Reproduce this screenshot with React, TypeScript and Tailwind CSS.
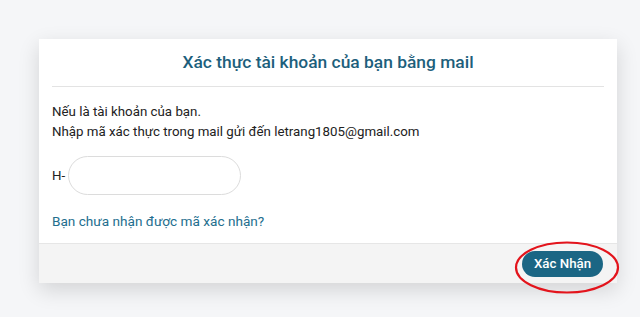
import React from "react";

export default function App() {
  return (
    <div
      className="w-[640px] h-[317px] bg-[#f5f6f8] pt-[39px] pl-[39px] overflow-hidden"
      style={{ fontFamily: "Roboto, 'Noto Sans', sans-serif" }}
    >
      <div className="relative w-[578px] bg-white shadow-[0_7px_20px_rgba(0,0,0,0.14)]">
        <div className="px-[13px]">
          <div className="h-[48px] flex items-center justify-center border-b border-[#e3e3e3]">
            <h1 className="text-[17.4px] font-medium text-[#1d5f7c] leading-none">
              Xác thực tài khoản của bạn bằng mail
            </h1>
          </div>
        </div>
        <div className="px-[13px] pt-[15px] pb-[12px] text-[13.3px] leading-[20px] text-[#222]">
          <p>Nếu là tài khoản của bạn.</p>
          <p>Nhập mã xác thực trong mail gửi đến letrang1805@gmail.com</p>
          <div className="mt-[14px] flex items-center">
            <span className="mr-[3px]">H-</span>
            <input
              type="text"
              className="w-[173px] h-[39px] rounded-full border border-[#dcdcdc] outline-none px-4"
            />
          </div>
          <p className="mt-[16px] text-[13.6px] text-[#236e8e]">Bạn chưa nhận được mã xác nhận?</p>
        </div>
        <div className="h-[40px] bg-[#f4f4f4] border-t border-[#e6e6e6] flex items-center justify-end pr-[14px]">
          <button className="w-[81px] h-[26px] rounded-full bg-[#1b6684] text-white text-[13.3px] font-medium">
            Xác Nhận
          </button>
        </div>
        <svg
          className="absolute"
          style={{ left: 475, top: 202 }}
          width="106"
          height="53"
          viewBox="0 0 106 53"
        >
          <ellipse cx="53" cy="26.5" rx="51" ry="25" fill="none" stroke="#e3141c" strokeWidth="2.2" />
        </svg>
      </div>
    </div>
  );
}
